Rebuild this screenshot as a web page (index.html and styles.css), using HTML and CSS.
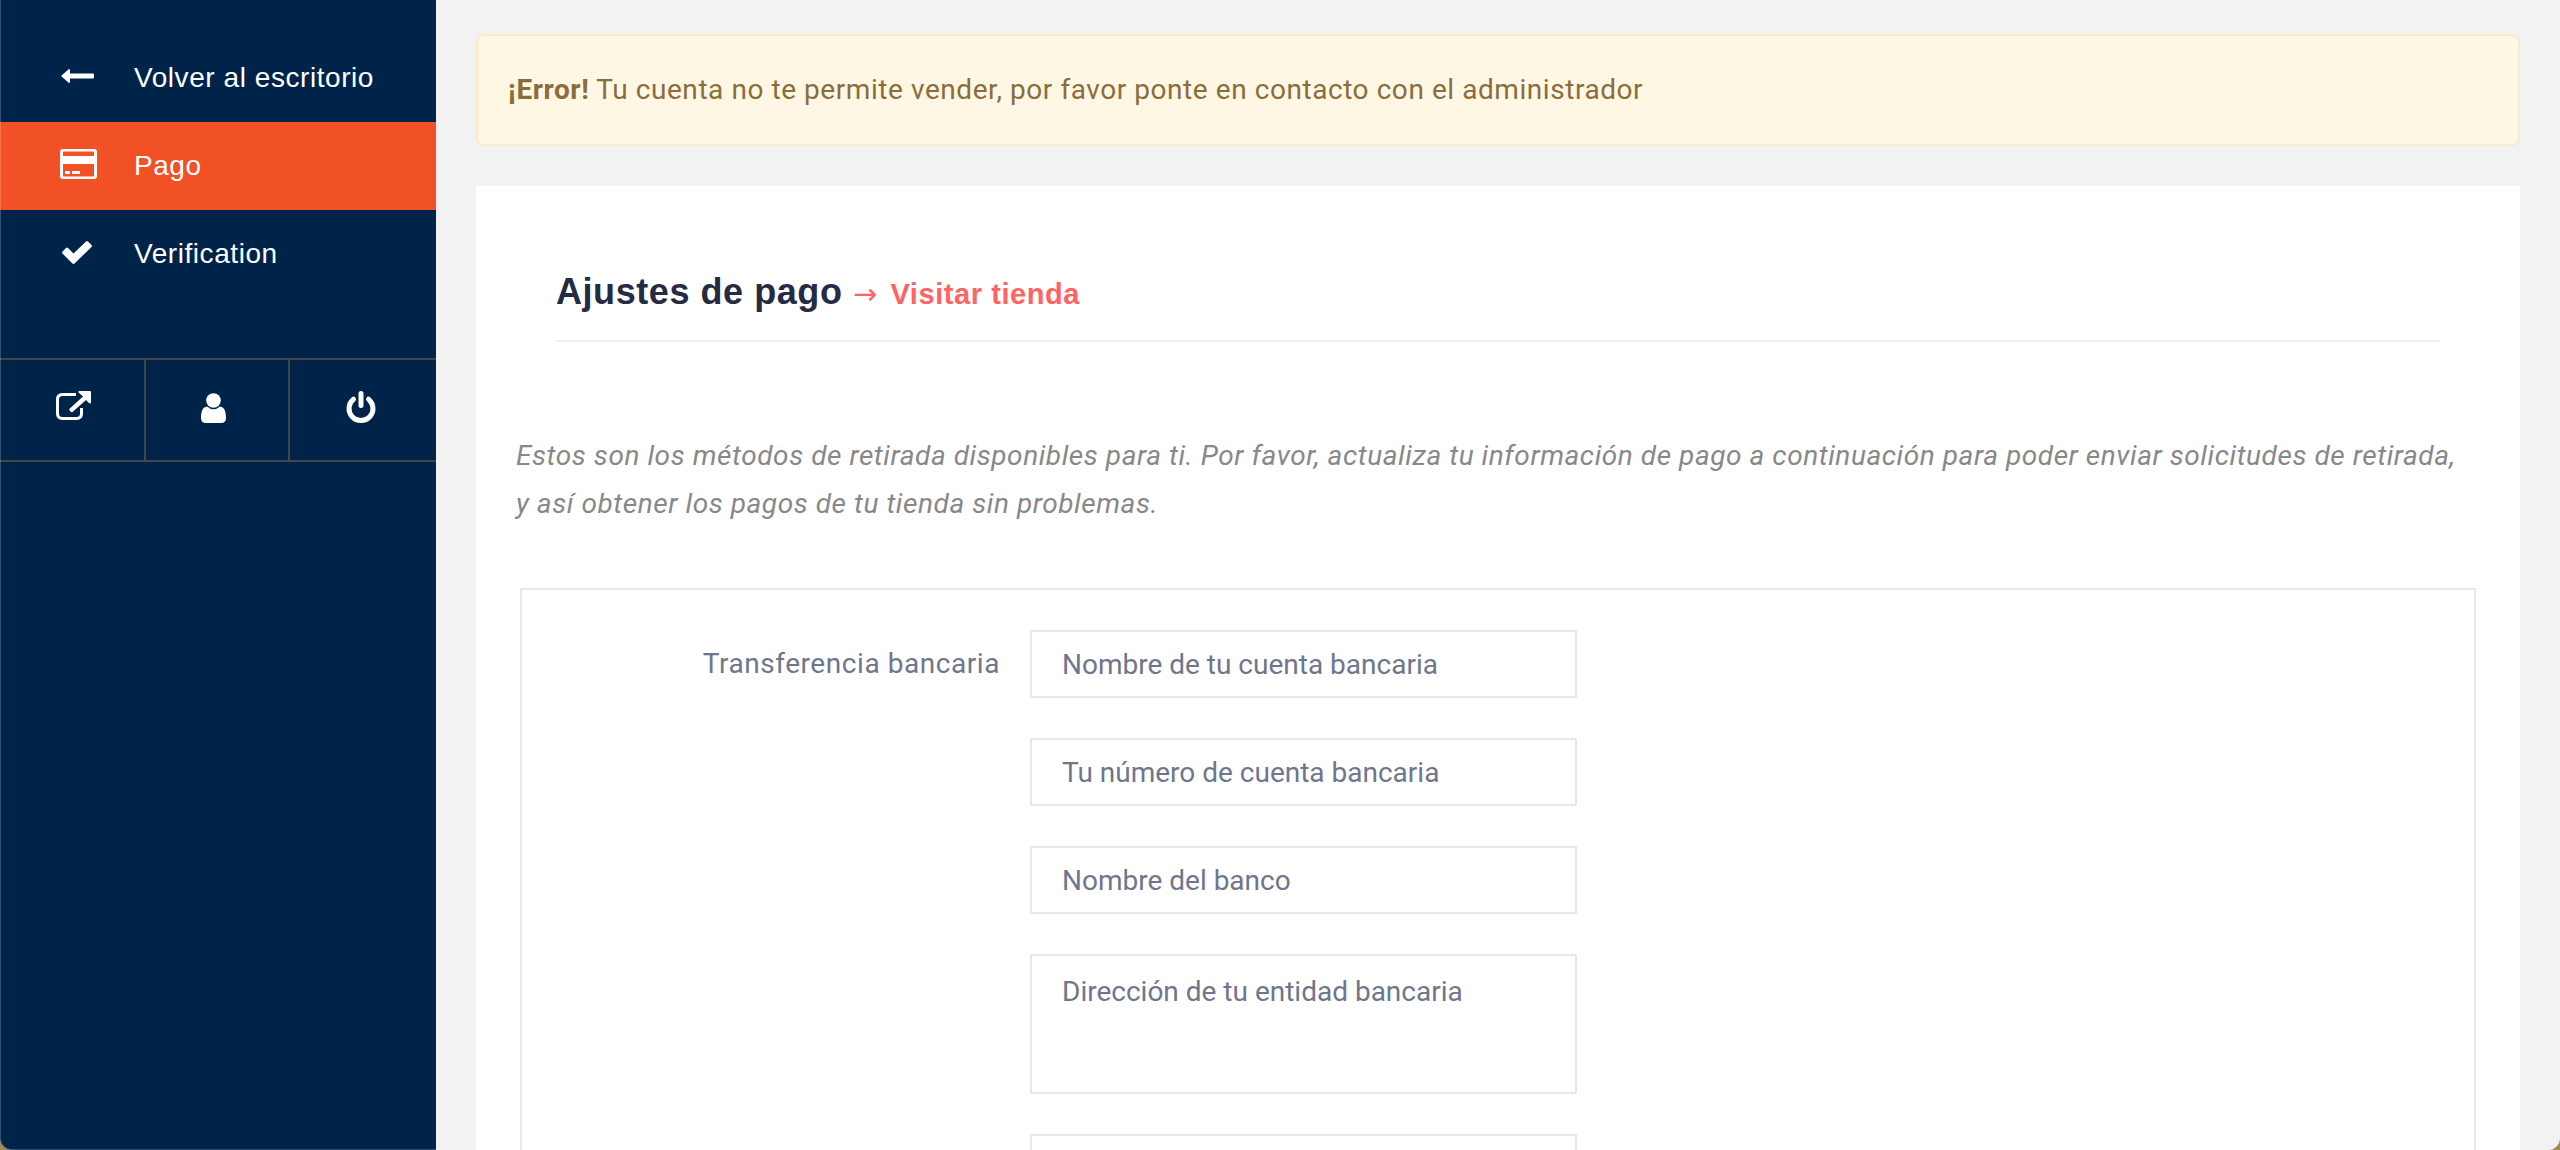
FILE: index.html
```html
<!DOCTYPE html>
<html lang="es">
<head>
    <meta charset="UTF-8">
    <meta name="viewport" content="width=device-width, initial-scale=1.0">
    <title>Ajustes de pago</title>
    <link rel="stylesheet" href="styles.css">
</head>
<body>
    <div class="page">
        <!-- Menú lateral -->
        <aside class="sidebar">
            <nav class="menu">
                <a href="#">
                    <svg class="icon" viewBox="0 0 40 40"><path d="M3 18 L11 11 Q12 11 12 12 V15.500 H35 Q36 15.500 36 16.500 V19.500 Q36 20.500 35 20.500 H12 V24 Q12 25 11 25 Z"/></svg>
                    Volver al escritorio
                </a>
                <a href="#" class="active">
                    <svg class="icon" viewBox="0 0 40 40"><path fill-rule="evenodd" d="M5 3 H36 Q39 3 39 6 V30 Q39 33 36 33 H5 Q2 33 2 30 V6 Q2 3 5 3 Z M6 5.500 Q5 5.500 5 6.500 V10 H36 V6.500 Q36 5.500 35 5.500 Z M5 18 V29.500 Q5 30.500 6 30.500 H35 Q36 30.500 36 29.500 V18 Z M7 25 H12 V28 H7 Z M14 25 H22 V28 H14 Z"/></svg>
                    Pago
                </a>
                <a href="#">
                    <svg class="icon" viewBox="0 0 40 40"><path d="M4.500 17.500 L8 14 Q9 13.200 10 14 L15.500 19.500 L28 7.500 Q29 6.700 30 7.500 L33.500 11 Q34.300 12 33.500 13 L16.500 29.500 Q15.500 30.300 14.500 29.500 L4.500 19.500 Q3.700 18.500 4.500 17.500 Z"/></svg>
                    Verification
                </a>
            </nav>
            <div class="shortcuts">
                <a href="#" aria-label="Visitar tienda">
                    <svg class="icon" viewBox="0 0 40 40"><path class="line" d="M24 4.500 H10.500 Q5.500 4.500 5.500 9.500 V23.500 Q5.500 28.500 10.500 28.500 H24.500 Q29.500 28.500 29.500 23.500 V18"/><path d="M27 1 H38 Q39 1 39 2 V12.500 Q38.500 14 37 13 L34 10 L20.500 22 Q19.500 22.500 18.700 21.700 L17.500 20.300 Q17 19.500 17.500 18.700 L31 6.500 L26.500 2.500 Q25.500 1.500 27 1 Z"/></svg>
                </a>
                <a href="#" aria-label="Editar cuenta">
                    <svg class="icon" viewBox="0 0 40 40"><circle cx="16.500" cy="10.500" r="7.300"/><path d="M10 16.500 Q16.500 22 23 16.500 C28 17 29 23 29 28 Q29 33 24 33 H9 Q4 33 4 28 C4 23 5 17 10 16.500 Z"/></svg>
                </a>
                <a href="#" aria-label="Cerrar sesión">
                    <svg class="icon power" viewBox="0 0 40 40"><path d="M18 3.500 V15.500 M10.500 9.200 A12 12 0 1 0 25.500 9.200"/></svg>
                </a>
            </div>
        </aside>

        <main class="content">
            <div class="alert"><strong>¡Error!</strong> Tu cuenta no te permite vender, por favor ponte en contacto con el administrador</div>

            <section class="panel">
                <h1>Ajustes de pago <a href="#"><span class="arrow">→</span> Visitar tienda</a></h1>

                <p class="help">Estos son los métodos de retirada disponibles para ti. Por favor, actualiza tu información de pago a continuación para poder enviar solicitudes de retirada, y así obtener los pagos de tu tienda sin problemas.</p>

                <form class="payment">
                    <label for="cuenta">Transferencia bancaria</label>
                    <div class="fields">
                        <input type="text" id="cuenta" placeholder="Nombre de tu cuenta bancaria">
                        <input type="text" aria-label="Número de cuenta" placeholder="Tu número de cuenta bancaria">
                        <input type="text" aria-label="Nombre del banco" placeholder="Nombre del banco">
                        <textarea aria-label="Dirección del banco" placeholder="Dirección de tu entidad bancaria"></textarea>
                        <input type="text" aria-label="Número de ruta">
                    </div>
                </form>
            </section>
        </main>
    </div>
</body>
</html>
```
FILE: styles.css
```css
* {
    box-sizing: border-box;
}
body {
    margin: 0;
    background-color: #a58a58;
    font-family: Roboto, sans-serif;
    font-size: 28px;
    letter-spacing: 0.02em;
}
a {
    text-decoration: none;
}
.page {
    position: relative;
    display: flex;
    height: 100vh;
    overflow: hidden;
    background-color: #f2f2f2;
    border-radius: 0 0 12px 12px;
}
/* window edge */
.page::after {
    content: "";
    position: absolute;
    inset: 0;
    border: 1px solid rgba(255, 255, 255, 0.2);
    border-top: none;
    border-radius: 0 0 12px 12px;
    pointer-events: none;
}

/* sidebar */
.sidebar {
    flex: 0 0 436px;
    padding-top: 34px;
    background-color: #002449;
    font-family: "Liberation Sans", Arial, sans-serif;
}
.menu a {
    display: flex;
    align-items: center;
    gap: 36px;
    height: 88px;
    padding-left: 58px;
    color: #fff;
}
.menu a.active {
    background-color: #f25125;
}
.icon {
    flex: none;
    width: 40px;
    height: 40px;
    fill: #fff;
}
.icon .line {
    fill: none;
    stroke: #fff;
    stroke-width: 3;
}
.power {
    fill: none;
    stroke: #fff;
    stroke-width: 5;
    stroke-linecap: round;
}
.shortcuts {
    display: grid;
    grid-template-columns: 146px 144px 1fr;
    height: 104px;
    margin-top: 60px;
    border-top: 2px solid #454545;
    border-bottom: 2px solid #454545;
}
.shortcuts a {
    display: flex;
    align-items: center;
    justify-content: center;
    border-right: 2px solid #454545;
}
.shortcuts a:last-child {
    border-right: none;
}

/* content */
.content {
    flex: 1;
    padding: 34px 40px 0;
    overflow-y: auto;
    scrollbar-width: none;
}
.alert {
    margin-bottom: 40px;
    padding: 30px;
    border: 2px solid #faebcc;
    border-radius: 8px;
    background-color: #fef7e3;
    color: #8a6d3b;
    line-height: 48px;
}
.panel {
    padding: 80px 40px;
    background-color: #fff;
}
h1 {
    margin: 0 40px 90px;
    padding-bottom: 22px;
    border-bottom: 2px solid #eee;
    color: #242b42;
    font-family: "Liberation Sans", Arial, sans-serif;
    font-size: 36px;
    line-height: 52px;
}
h1 a {
    color: #ff6464;
    font-size: 29px;
    line-height: 1;
}
.arrow {
    margin-right: 4px;
    font-family: "DejaVu Sans", sans-serif;
    font-weight: normal;
}
.help {
    margin: 0 0 60px;
    padding-right: 20px;
    color: #888;
    font-style: italic;
    line-height: 48px;
}
.payment {
    display: flex;
    margin: 0 4px;
    padding: 40px 0;
    border: 2px solid #e7e6ec;
}
.payment label {
    width: 25%;
    padding-right: 10px;
    color: #6f768c;
    line-height: 68px;
    text-align: right;
}
.fields {
    display: flex;
    flex-direction: column;
    gap: 40px;
    width: 28%;
    margin-left: 20px;
}
.fields input,
.fields textarea {
    width: 100%;
    height: 68px;
    padding: 0 30px;
    border: 2px solid #e7e6ec;
    background-color: #fff;
    color: #6f768c;
    font-family: inherit;
    font-size: 28px;
}
.fields textarea {
    height: 140px;
    padding: 16px 30px;
    line-height: 40px;
    resize: none;
}
.fields ::placeholder {
    color: #6f768c;
}
```
